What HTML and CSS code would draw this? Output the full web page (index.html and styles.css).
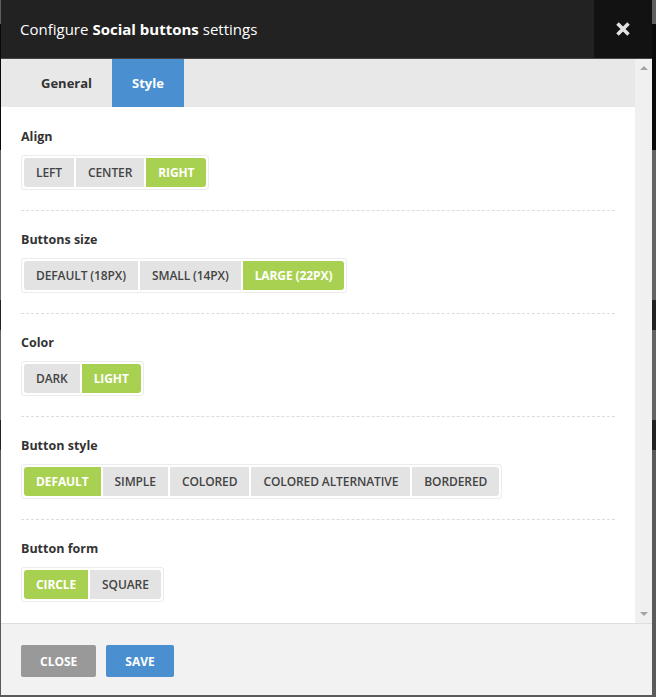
FILE: index.html
```html
<!DOCTYPE html>
<html>
<head>
<meta charset="utf-8">
<link rel="stylesheet" href="styles.css">
</head>
<body>
<div class="modal">
  <div class="header">
    <div class="title">Configure <b>Social buttons</b> settings</div>
    <div class="close">
      <svg width="16" height="16" viewBox="0 0 16 16"><path d="M2.5 2.5 L13.5 13.5 M13.5 2.5 L2.5 13.5" stroke="#e2e2e2" stroke-width="3.6" stroke-linecap="butt"/></svg>
    </div>
  </div>
  <div class="main">
    <div class="scroll">
      <div class="tabs">
        <div class="tab">General</div>
        <div class="tab active">Style</div>
      </div>
      <div class="content">
        <div class="section">
          <div class="label">Align</div>
          <div class="group">
            <span class="btn">Left</span><span class="btn">Center</span><span class="btn on">Right</span>
          </div>
        </div>
        <div class="section">
          <div class="label">Buttons size</div>
          <div class="group">
            <span class="btn">Default (18px)</span><span class="btn">Small (14px)</span><span class="btn on">Large (22px)</span>
          </div>
        </div>
        <div class="section">
          <div class="label">Color</div>
          <div class="group">
            <span class="btn">Dark</span><span class="btn on">Light</span>
          </div>
        </div>
        <div class="section">
          <div class="label">Button style</div>
          <div class="group">
            <span class="btn on">Default</span><span class="btn">Simple</span><span class="btn">Colored</span><span class="btn">Colored alternative</span><span class="btn">Bordered</span>
          </div>
        </div>
        <div class="section last">
          <div class="label">Button form</div>
          <div class="group">
            <span class="btn on">Circle</span><span class="btn">Square</span>
          </div>
        </div>
      </div>
    </div>
    <div class="scrollbar">
      <span class="arrow up"></span>
      <span class="arrow down"></span>
    </div>
  </div>
  <div class="footer">
    <span class="fbtn gray">Close</span>
    <span class="fbtn blue">Save</span>
  </div>
</div>
</body>
</html>
```
FILE: styles.css
```css
html, body {
  margin: 0;
  padding: 0;
}
body {
  width: 656px;
  height: 697px;
  overflow: hidden;
  background: linear-gradient(#5f5f5f 0 24px, #0a0a0a 24px 150px, #646464 150px 300px, #222 300px 330px, #646464 330px 420px, #222 420px 450px, #5a5a5a 450px);
  font-family: "Open Sans", "Noto Sans", sans-serif;
}
.modal {
  margin-left: 1px;
  width: 651px;
  height: 695px;
  display: flex;
  flex-direction: column;
  background: #fff;
}
.header {
  height: 58px;
  flex: none;
  display: flex;
  background: #222;
  border-bottom: 1px solid #4a4242;
}
.title {
  flex: 1;
  padding-left: 19px;
  display: flex;
  align-items: center;
  color: #fff;
  font-size: 15px;
}
.title b {
  font-weight: 700;
  margin: 0 4px;
}
.close {
  width: 58px;
  background: #121212;
  display: flex;
  align-items: center;
  justify-content: center;
}
.main {
  flex: 1;
  display: flex;
  min-height: 0;
  border-bottom: 1px solid #dedede;
}
.scroll {
  flex: 1;
  overflow: hidden;
}
.tabs {
  height: 48px;
  background: #e8e8e8;
  display: flex;
  padding-left: 20px;
}
.tab {
  padding: 0 20px;
  display: flex;
  align-items: center;
  font-size: 13px;
  font-weight: 700;
  color: #333;
}
.tab.active {
  background: #4a90d1;
  color: #fff;
}
.content {
  padding: 1px 20px 0;
}
.section {
  padding: 20px 0;
  border-bottom: 1px dashed #dcdcdc;
}
.section.last {
  border-bottom: none;
}
.label {
  font-size: 12.5px;
  line-height: 18px;
  font-weight: 700;
  color: #333;
  margin-bottom: 9px;
}
.group {
  display: inline-flex;
  gap: 2px;
  padding: 2px;
  border: 1px solid #ececec;
  border-radius: 3px;
}
.btn {
  height: 29px;
  padding: 0 12px;
  display: flex;
  align-items: center;
  background: #e3e3e3;
  color: #444;
  font-size: 12px;
  font-weight: 600;
  text-transform: uppercase;
  letter-spacing: -0.1px;
}
.btn:first-child {
  border-radius: 3px 0 0 3px;
}
.btn:last-child {
  border-radius: 0 3px 3px 0;
}
.btn.on {
  background: #a9d151;
  color: #fff;
  font-weight: 700;
}
.scrollbar {
  width: 17px;
  background: #f0f0f0;
  display: flex;
  flex-direction: column;
  justify-content: space-between;
  align-items: center;
  padding: 7px 0 7px;
}
.arrow {
  width: 0;
  height: 0;
  border-left: 4px solid transparent;
  border-right: 4px solid transparent;
}
.arrow.up {
  border-bottom: 4px solid #a3a3a3;
}
.arrow.down {
  border-top: 4px solid #a3a3a3;
}
.footer {
  height: 71px;
  flex: none;
  background: #f2f2f2;
  display: flex;
  align-items: flex-start;
  gap: 10px;
  padding: 21px 20px 0;
  box-sizing: border-box;
}
.fbtn {
  height: 32px;
  padding: 0 19px;
  display: flex;
  align-items: center;
  border-radius: 2px;
  color: #fff;
  font-size: 12px;
  font-weight: 700;
  text-transform: uppercase;
}
.fbtn.gray {
  background: #999;
}
.fbtn.blue {
  background: #4a90d1;
}
```
